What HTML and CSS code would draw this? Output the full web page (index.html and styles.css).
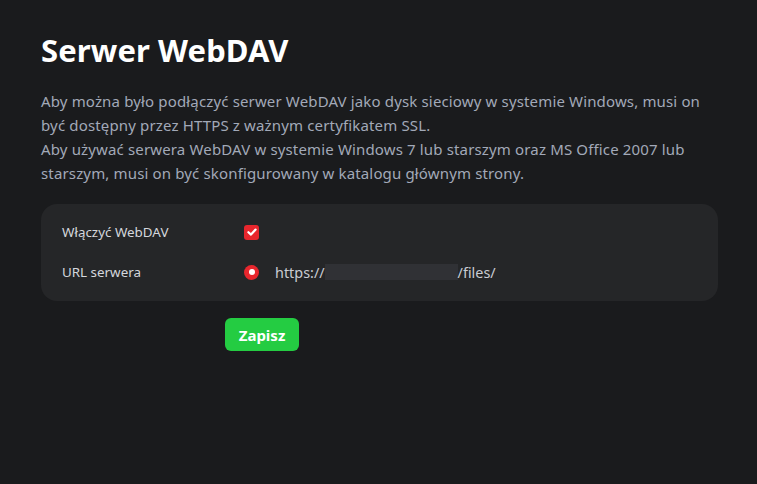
FILE: index.html
```html
<!DOCTYPE html>
<html lang="pl">
<head>
<meta charset="utf-8">
<title>Serwer WebDAV</title>
<link rel="stylesheet" href="styles.css">
</head>
<body>
<main class="page">
  <h1 class="title">Serwer WebDAV</h1>
  <p class="desc">Aby można było podłączyć serwer WebDAV jako dysk sieciowy w systemie Windows, musi on być dostępny przez HTTPS z ważnym certyfikatem SSL.<br>Aby używać serwera WebDAV w systemie Windows 7 lub starszym oraz MS Office 2007 lub starszym, musi on być skonfigurowany w katalogu głównym strony.</p>
  <section class="card">
    <div class="row">
      <span class="label">Włączyć WebDAV</span>
      <span class="check"><svg viewBox="0 0 14 14" width="14" height="14"><path d="M3.4 7.2 L6 9.6 L10.6 4.6" fill="none" stroke="#fff" stroke-width="2.2" stroke-linecap="round" stroke-linejoin="round"/></svg></span>
    </div>
    <div class="row">
      <span class="label">URL serwera</span>
      <span class="radio"></span>
      <span class="url">https://<span class="mask"></span>/files/</span>
    </div>
  </section>
  <div class="actions">
    <button class="save">Zapisz</button>
  </div>
</main>
</body>
</html>
```
FILE: styles.css
```css
html, body {
  margin: 0;
  background: #1a1b1d;
}
body {
  font-family: "Segoe UI", "Noto Sans", "Open Sans", sans-serif;
  color: #e6e8ec;
}
.page {
  padding: 28px 39px 0 41px;
}
.title {
  margin: 0;
  font-size: 31px;
  font-weight: 700;
  color: #ffffff;
  line-height: 44px;
  letter-spacing: 0.1px;
}
.desc {
  margin: 17px 0 0;
  font-size: 15px;
  letter-spacing: 0.15px;
  line-height: 24px;
  color: #a2a9b8;
}
.card {
  margin-top: 19px;
  background: #252628;
  border-radius: 16px;
  padding: 8px 21px 9px;
}
.row {
  display: flex;
  align-items: center;
  height: 40px;
}
.label {
  width: 182px;
  font-size: 13.4px;
  color: #d4d7dd;
}
.check {
  width: 15px;
  height: 15px;
  border-radius: 3px;
  background: #e8262d;
  display: flex;
  align-items: center;
  justify-content: center;
}
.radio {
  width: 15px;
  height: 15px;
  border-radius: 50%;
  background: #e8262d;
  display: flex;
  align-items: center;
  justify-content: center;
}
.radio::after {
  content: "";
  width: 6px;
  height: 6px;
  border-radius: 50%;
  background: #fff;
}
.url {
  margin-left: 16px;
  font-size: 14.4px;
  color: #c9ccd3;
  display: flex;
  align-items: center;
}
.mask {
  display: inline-block;
  width: 133px;
  height: 16px;
  background: #303135;
}
.actions {
  margin-top: 17px;
  padding-left: 184px;
}
.save {
  font-family: inherit;
  font-size: 15px;
  font-weight: 700;
  color: #fff;
  background: #24cc42;
  border: 0;
  border-radius: 6px;
  height: 33px;
  width: 74px;
  padding: 0;
}
```
